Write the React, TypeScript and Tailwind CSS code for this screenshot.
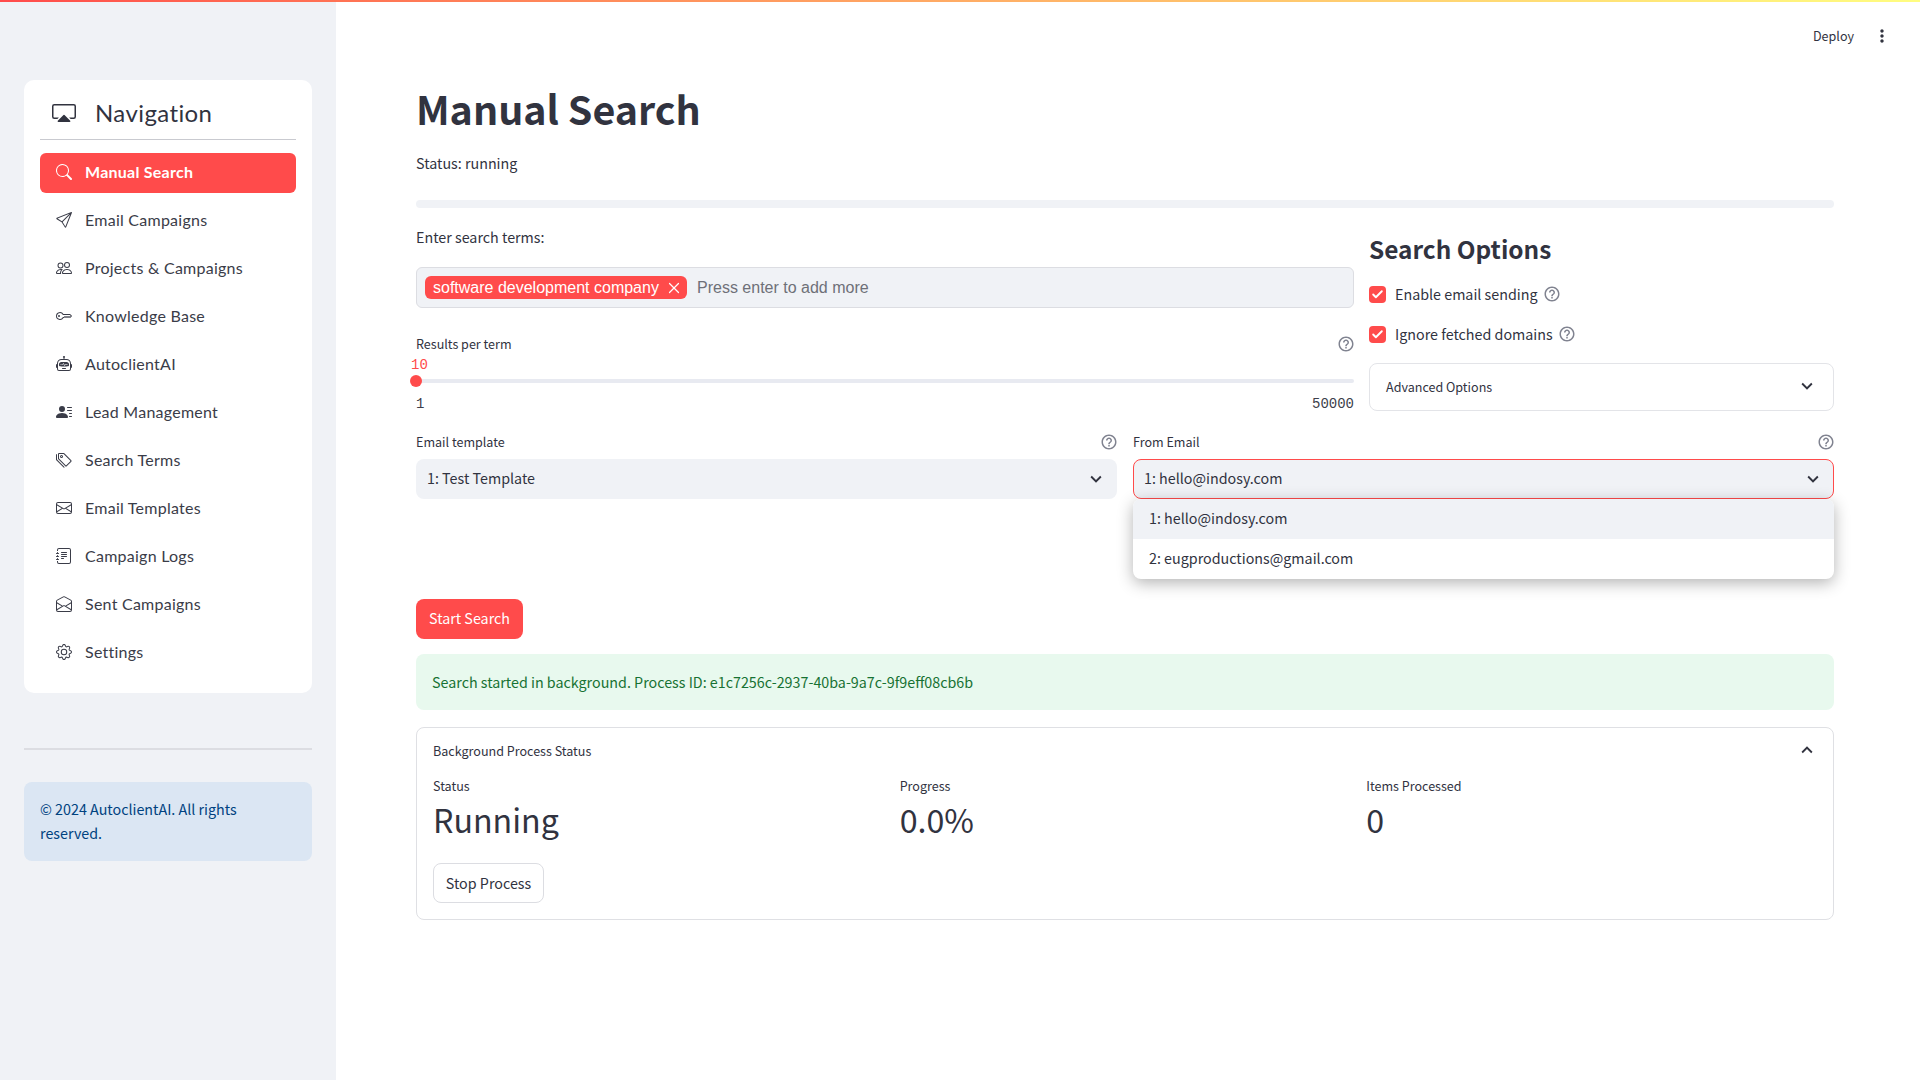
import { BsCast, BsSearch, BsSend, BsPeople, BsKey, BsRobot, BsPersonLinesFill, BsTags, BsEnvelope, BsJournalText, BsEnvelopeOpen, BsGear } from "react-icons/bs";
import { MdHelpOutline, MdExpandMore, MdExpandLess, MdMoreVert } from "react-icons/md";
import { X, Check as CheckIcon } from "lucide-react";

const nav = [
  { label: "Manual Search", Icon: BsSearch, active: true },
  { label: "Email Campaigns", Icon: BsSend },
  { label: "Projects & Campaigns", Icon: BsPeople },
  { label: "Knowledge Base", Icon: BsKey },
  { label: "AutoclientAI", Icon: BsRobot },
  { label: "Lead Management", Icon: BsPersonLinesFill },
  { label: "Search Terms", Icon: BsTags },
  { label: "Email Templates", Icon: BsEnvelope },
  { label: "Campaign Logs", Icon: BsJournalText },
  { label: "Sent Campaigns", Icon: BsEnvelopeOpen },
  { label: "Settings", Icon: BsGear },
];

function Help() {
  return <MdHelpOutline size={18} className="text-[#808390] shrink-0 -mr-[1px]" />;
}

function Check({ label }: { label: string }) {
  return (
    <div className="flex items-center h-6">
      <span className="w-[17px] h-[17px] rounded-[4px] bg-[#ff4b4b] flex items-center justify-center shrink-0">
        <CheckIcon size={13} strokeWidth={3.5} className="text-white" />
      </span>
      <span className="ml-[9px] mr-[5px] text-[14.3px] leading-6">{label}</span>
      <Help />
    </div>
  );
}

function Metric({ label, value }: { label: string; value: string }) {
  return (
    <div>
      <div className="text-[12.55px] leading-5">{label}</div>
      <div className="text-[32.2px] leading-[48px] -mt-[1px]">{value}</div>
    </div>
  );
}

export default function App() {
  return (
    <div className="relative flex min-h-[1080px] w-full bg-white text-[#31333f] font-['Noto_Sans_CJK_SC','Noto_Sans',sans-serif] overflow-hidden">
      <div className="absolute top-0 left-0 right-0 h-[2px] bg-gradient-to-r from-[#ff4b4b] to-[#fffd80]" />

      <aside className="w-[336px] shrink-0 bg-[#f0f2f6] pt-[80px] px-[24px]">
        <div className="bg-white rounded-[10px] px-4 pb-5 font-['Lato',sans-serif]">
          <div className="h-[60px] border-b border-[#c9cad0] flex items-center pl-[12px] pt-[7px]">
            <BsCast size={24} className="text-[#31333f]" />
            <span className="ml-[19px] text-[24px] tracking-[0.4px] text-[#31333f]">Navigation</span>
          </div>
          <div className="mt-[13px] flex flex-col gap-2">
            {nav.map(({ label, Icon, active }) => (
              <div
                key={label}
                className={
                  active
                    ? "h-10 rounded-[6px] bg-[#ff4b4b] text-white font-bold flex items-center pl-4 pb-[2px]"
                    : "h-10 rounded-[6px] text-[#3a3c48] flex items-center pl-4 pb-[2px]"
                }
              >
                <Icon size={16} className="shrink-0" />
                <span className="ml-[13px] text-[16px] tracking-[0.25px]">{label}</span>
              </div>
            ))}
          </div>
        </div>
        <div className="mt-[55px] h-[2px] bg-[#dcdde2]" />
        <div className="mt-[32px] rounded-[8px] bg-[#dbe6f3] pt-[15px] pb-4 px-4 text-[14.3px] leading-6 text-[#004280]">
          © 2024 AutoclientAI. All rights reserved.
        </div>
      </aside>

      <main className="relative flex-1 pl-[80px] pr-[86px] pt-[78px]">
        <div className="absolute top-[26px] right-[26px] flex items-center text-[12.55px] leading-5">
          <span>Deploy</span>
          <MdMoreVert size={20} className="ml-[18px] mr-[2px]" />
        </div>

        <h1 className="text-[39.4px] leading-[60px] font-bold">Manual Search</h1>
        <p className="mt-[13px] text-[14.3px] leading-6">Status: running</p>
        <div className="mt-[25px] h-2 rounded-full bg-[#f0f2f6]" />

        <div className="mt-[17px] flex gap-[15px]">
          <div className="w-[938px]">
            <div className="text-[14.3px] leading-6">Enter search terms:</div>
            <div className="mt-[18px] h-[41px] rounded-[6px] border border-[#dcdde2] bg-[#f0f2f6] flex items-center pl-[8px] font-['Liberation_Sans',sans-serif]">
              <span className="h-[23px] w-[262px] rounded-[6px] bg-[#ff4b4b] text-white text-[16px] leading-[23px] flex items-center pl-[8px]">
                software development company
                <X size={18} strokeWidth={1.6} className="ml-[6px]" />
              </span>
              <span className="ml-[10px] text-[16px] text-[#6e7078]">Press enter to add more</span>
            </div>
            <div className="mt-[26px] flex justify-between items-center text-[12.55px] leading-5">
              <span>Results per term</span>
              <Help />
            </div>
            <div className="mt-[3px] -ml-[5px] font-['Liberation_Mono',monospace] text-[14px] leading-4 text-[#ff4b4b]">10</div>
            <div className="relative mt-[6px] h-1 rounded-full bg-[#e8eaf1]">
              <span className="absolute left-[-6px] top-[-4px] w-3 h-3 rounded-full bg-[#ff4b4b]" />
            </div>
            <div className="mt-[13px] flex justify-between font-['Liberation_Mono',monospace] text-[14px] leading-4 text-[#3c3e4a]">
              <span>1</span>
              <span>50000</span>
            </div>
          </div>

          <div className="w-[465px] pt-1">
            <h3 className="text-[24.4px] leading-10 font-semibold">Search Options</h3>
            <div className="mt-[13px]"><Check label="Enable email sending" /></div>
            <div className="mt-[16px]"><Check label="Ignore fetched domains" /></div>
            <div className="mt-[17px] h-[48px] rounded-[8px] border border-[#e3e4e8] flex items-center justify-between pl-4 pr-[15px] text-[12.55px]">
              <span>Advanced Options</span>
              <MdExpandMore size={22} className="-mt-[3px]" />
            </div>
          </div>
        </div>

        <div className="mt-[20px] grid grid-cols-2 gap-4">
          <div>
            <div className="flex justify-between items-center text-[12.55px] leading-5">
              <span>Email template</span>
              <Help />
            </div>
            <div className="mt-[7px] h-10 rounded-[8px] bg-[#f0f2f6] flex items-center justify-between pl-[11px] pr-[10px] text-[14.3px]">
              <span className="-mt-[2px]">1: Test Template</span>
              <MdExpandMore size={22} />
            </div>
          </div>
          <div className="relative">
            <div className="flex justify-between items-center text-[12.55px] leading-5">
              <span>From Email</span>
              <Help />
            </div>
            <div className="mt-[7px] h-10 rounded-[8px] bg-[#f0f2f6] border border-[#ff4b4b] flex items-center justify-between pl-[10px] pr-[9px] text-[14.3px]">
              <span className="-mt-[2px]">1: hello@indosy.com</span>
              <MdExpandMore size={22} />
            </div>
            <div className="absolute left-0 right-0 top-[67px] rounded-[8px] bg-white shadow-[0_4px_16px_rgba(0,0,0,0.3)] overflow-hidden text-[14.3px]">
              <div className="h-10 bg-[#f0f2f6] flex items-center pl-4 pb-[2px]">1: hello@indosy.com</div>
              <div className="h-10 flex items-center pl-4 pb-[2px]">2: eugproductions@gmail.com</div>
            </div>
          </div>
        </div>

        <button className="mt-[100px] h-10 w-[107px] rounded-[8px] bg-[#ff4b4b] text-white text-[14.3px] flex items-center justify-center pb-[2px]">Start Search</button>
        <div className="mt-[15px] h-[56px] rounded-[8px] bg-[#e8f9ee] text-[#177233] text-[14.3px] flex items-center pl-4">
          Search started in background. Process ID: e1c7256c-2937-40ba-9a7c-9f9eff08cb6b
        </div>

        <div className="mt-[17px] h-[193px] rounded-[8px] border border-[#dfe0e4] px-4 pt-[13px]">
          <div className="flex justify-between items-center text-[12.55px] leading-5">
            <span>Background Process Status</span>
            <MdExpandLess size={22} className="-mt-[3px] -mr-[1px]" />
          </div>
          <div className="mt-[15px] grid grid-cols-3 gap-4">
            <Metric label="Status" value="Running" />
            <Metric label="Progress" value="0.0%" />
            <Metric label="Items Processed" value="0" />
          </div>
          <button className="mt-[20px] h-10 w-[111px] rounded-[8px] border border-[#dcdde2] bg-white text-[14.3px] flex items-center justify-center">Stop Process</button>
        </div>
      </main>
    </div>
  );
}
